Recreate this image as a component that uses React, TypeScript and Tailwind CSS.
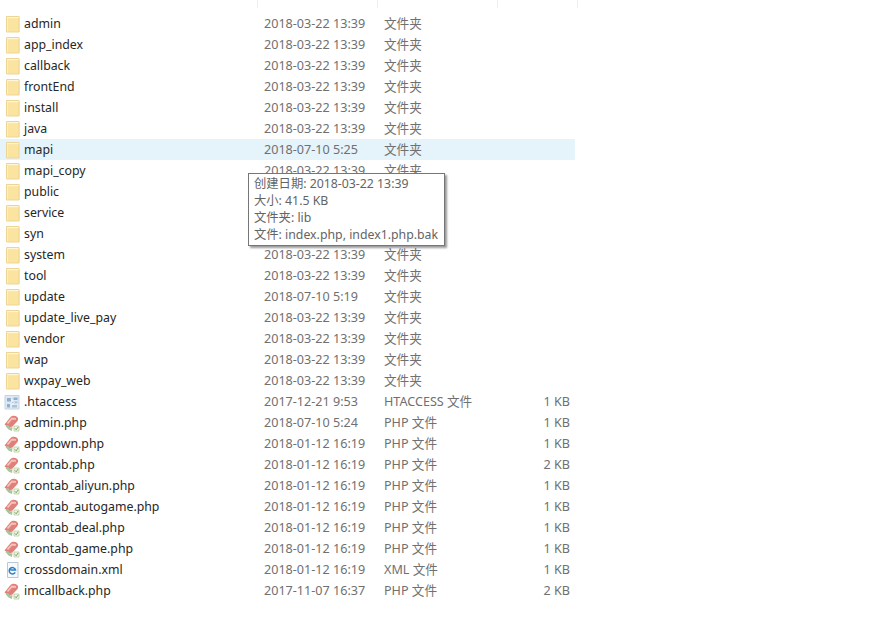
const folderRows = [
  ["admin", "2018-03-22 13:39"],
  ["app_index", "2018-03-22 13:39"],
  ["callback", "2018-03-22 13:39"],
  ["frontEnd", "2018-03-22 13:39"],
  ["install", "2018-03-22 13:39"],
  ["java", "2018-03-22 13:39"],
  ["mapi", "2018-07-10 5:25"],
  ["mapi_copy", "2018-03-22 13:39"],
  ["public", "2018-03-22 13:39"],
  ["service", "2018-03-22 13:39"],
  ["syn", "2018-03-22 13:39"],
  ["system", "2018-03-22 13:39"],
  ["tool", "2018-03-22 13:39"],
  ["update", "2018-07-10 5:19"],
  ["update_live_pay", "2018-03-22 13:39"],
  ["vendor", "2018-03-22 13:39"],
  ["wap", "2018-03-22 13:39"],
  ["wxpay_web", "2018-03-22 13:39"],
];

const fileRows = [
  { name: ".htaccess", date: "2017-12-21 9:53", type: "HTACCESS 文件", size: "1 KB", icon: "config" },
  { name: "admin.php", date: "2018-07-10 5:24", type: "PHP 文件", size: "1 KB", icon: "php" },
  { name: "appdown.php", date: "2018-01-12 16:19", type: "PHP 文件", size: "1 KB", icon: "php" },
  { name: "crontab.php", date: "2018-01-12 16:19", type: "PHP 文件", size: "2 KB", icon: "php" },
  { name: "crontab_aliyun.php", date: "2018-01-12 16:19", type: "PHP 文件", size: "1 KB", icon: "php" },
  { name: "crontab_autogame.php", date: "2018-01-12 16:19", type: "PHP 文件", size: "1 KB", icon: "php" },
  { name: "crontab_deal.php", date: "2018-01-12 16:19", type: "PHP 文件", size: "1 KB", icon: "php" },
  { name: "crontab_game.php", date: "2018-01-12 16:19", type: "PHP 文件", size: "1 KB", icon: "php" },
  { name: "crossdomain.xml", date: "2018-01-12 16:19", type: "XML 文件", size: "1 KB", icon: "xml" },
  { name: "imcallback.php", date: "2017-11-07 16:37", type: "PHP 文件", size: "2 KB", icon: "php" },
];

const FolderIcon = () => (
  <svg width="16" height="18" viewBox="0 0 16 18">
    <path d="M2.500 1.500h12.500v15.500H2.500z" fill="#fbe3a0" stroke="#ecd595" strokeWidth="1" />
    <path d="M3 2h11.500v1.200H3z" fill="#fff6d8" />
    <path d="M3 3.200h1v13H3z" fill="#fdeebf" />
    <path d="M15.500 2v15" stroke="#e6e2d2" strokeWidth="1" />
  </svg>
);

const PhpIcon = () => (
  <svg width="16" height="18" viewBox="0 0 16 18">
    <path d="M0.500 10.500 6.500 3c1.500-1.500 4.500-1.500 6-.5 2 1.300 2 3 1 4.500L8.500 12.500 5 13.500z" fill="#e0807a" />
    <path d="M3.500 9.500 8 4.500l4 .3" stroke="#f6c2ba" strokeWidth="1.800" fill="none" />
    <path d="M1.500 12 4 11l2.500 2.500 2-.5-.5 4-3.500-1.500z" fill="#a8c49c" />
    <path d="M10 12h5v5h-5z" fill="#f3f6e6" stroke="#b4cd9f" strokeWidth=".8" />
    <path d="M10.800 14.300l1.400 1.500 1.900-2.800" stroke="#6ea35c" strokeWidth="1" fill="none" />
  </svg>
);

const ConfigIcon = () => (
  <svg width="16" height="18" viewBox="0 0 16 18">
    <path d="M1 2.500h14v13.500H1z" fill="#dfe9f2" stroke="#c4d3e0" strokeWidth="1" />
    <path d="M3 5h4v3.500H3zM9.500 4.500h4V7h-4zM3 11h3v3.500H3z" fill="#8db0d2" />
    <path d="M8 8.500h5.500v1.800H8zM8 12h5v2.500H8z" fill="#a9c3da" />
    <path d="M7 6.500l3 3-3 3" stroke="#ffffff" strokeWidth="1" fill="none" />
  </svg>
);

const XmlIcon = () => (
  <svg width="16" height="18" viewBox="0 0 16 18">
    <path d="M3.500 1.500h10.500v15H3.500z" fill="#f7fafd" stroke="#b9c8d6" strokeWidth="1" />
    <path d="M11.200 11.300a3.200 3.200 0 1 1 .3-2.300H6.300" fill="none" stroke="#2f7fc0" strokeWidth="1.500" />
  </svg>
);

const fileIcons: Record<string, () => React.ReactElement> = {
  php: PhpIcon,
  config: ConfigIcon,
  xml: XmlIcon,
};

type RowProps = {
  name: string;
  date: string;
  type: string;
  size?: string;
  icon: React.ReactNode;
  hovered?: boolean;
};

const Row = ({ name, date, type, size, icon, hovered }: RowProps) => (
  <div className={`flex h-[21px] w-[575px] items-center ${hovered ? "bg-[#e5f3fb]" : ""}`}>
    <div className="flex w-[24px] shrink-0 justify-start pl-[4px]">{icon}</div>
    <div className="w-[240px] shrink-0 text-[12.3px] text-[#262626]">{name}</div>
    <div className="w-[120px] shrink-0 text-[12.6px] text-[#707070]">{date}</div>
    <div className="w-[120px] shrink-0 text-[12.6px] text-[#707070]">{type}</div>
    <div className="w-[66px] shrink-0 text-right text-[12.6px] text-[#707070]">{size}</div>
  </div>
);

export default function App() {
  return (
    <div className="relative h-[619px] w-[881px] overflow-hidden bg-white font-['Noto_Sans','Noto_Sans_CJK_SC',sans-serif] leading-[21px]">
      <div className="flex h-[13px] w-[578px]">
        <div className="h-[8px] w-[258px] border-r border-[#eeeeee]" />
        <div className="h-[8px] w-[120px] border-r border-[#eeeeee]" />
        <div className="h-[8px] w-[120px] border-r border-[#eeeeee]" />
        <div className="h-[8px] w-[80px] border-r border-[#eeeeee]" />
      </div>
      {folderRows.map(([name, date]) => (
        <Row key={name} name={name} date={date} type="文件夹" icon={<FolderIcon />} hovered={name === "mapi"} />
      ))}
      {fileRows.map((file) => {
        const Icon = fileIcons[file.icon];
        return <Row key={file.name} name={file.name} date={file.date} type={file.type} size={file.size} icon={<Icon />} />;
      })}
      <div className="absolute left-[248px] top-[173px] h-[73px] w-[197px] whitespace-nowrap border border-[#767676] bg-white pl-[5px] pt-[1px] text-[12.3px] leading-[17px] text-[#646464] shadow-[2px_2px_2px_rgba(0,0,0,0.4)]">
        <div>创建日期: 2018-03-22 13:39</div>
        <div>大小: 41.5 KB</div>
        <div>文件夹: lib</div>
        <div>文件: index.php, index1.php.bak</div>
      </div>
    </div>
  );
}
